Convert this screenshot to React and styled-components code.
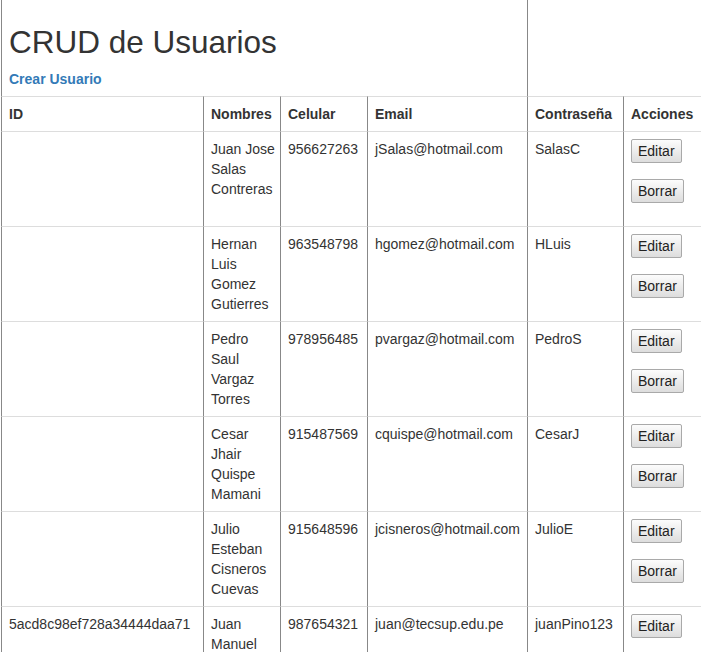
import React from "react";
import styled, { createGlobalStyle } from "styled-components";

const Global = createGlobalStyle`
  html, body {
    margin: 0;
    padding: 0;
    background: #fff;
    overflow: hidden;
  }
  body {
    font-family: "Liberation Sans", Arial, Helvetica, sans-serif;
    font-size: 14px;
    line-height: 20px;
    color: #333;
  }
  * { box-sizing: border-box; }
`;

const COLS = "202px 77px 87px 160px 96px 78px";

const Page = styled.div`
  padding-left: 1px;
  width: 702px;
`;

const Row = styled.div`
  display: grid;
  grid-template-columns: ${COLS};
`;

const Cell = styled.div`
  border-left: 1px solid #888;
  border-top: ${(p) => (p.$noTop ? "none" : "1px solid #ddd")};
  padding: 7px 4px 7px 7px;
  grid-column: ${(p) => (p.$span ? `span ${p.$span}` : "auto")};
  font-weight: ${(p) => (p.$head ? "bold" : "normal")};
  word-wrap: break-word;
`;

const Title = styled.h1`
  font-size: 31.5px;
  font-weight: normal;
  line-height: 1.1;
  margin: 17.5px 0 10px;
  color: #333;
`;

const CreateLink = styled.a`
  color: #337ab7;
  font-weight: bold;
  text-decoration: none;
`;

const Actions = styled.div`
  display: flex;
  flex-direction: column;
  align-items: flex-start;
  gap: 16px;
  padding-bottom: 16px;
`;

const Button = styled.button`
  font-family: inherit;
  font-size: 14px;
  line-height: 20px;
  height: 24px;
  padding: 1px 6px;
  margin: 0;
  color: #222;
  border: 1px solid #a9a9a9;
  border-radius: 2px;
  background: linear-gradient(#fcfcfc, #dddddd);
  cursor: pointer;
`;

const users = [
  { id: "", name: "Juan Jose Salas Contreras", phone: "956627263", email: "jSalas@hotmail.com", pass: "SalasC" },
  { id: "", name: "Hernan Luis Gomez Gutierres", phone: "963548798", email: "hgomez@hotmail.com", pass: "HLuis" },
  { id: "", name: "Pedro Saul Vargaz Torres", phone: "978956485", email: "pvargaz@hotmail.com", pass: "PedroS" },
  { id: "", name: "Cesar Jhair Quispe Mamani", phone: "915487569", email: "cquispe@hotmail.com", pass: "CesarJ" },
  { id: "", name: "Julio Esteban Cisneros Cuevas", phone: "915648596", email: "jcisneros@hotmail.com", pass: "JulioE" },
  { id: "5acd8c98ef728a34444daa71", name: "Juan Manuel Pino Rojas", phone: "987654321", email: "juan@tecsup.edu.pe", pass: "juanPino123" },
];

export default function App() {
  return (
    <>
      <Global />
      <Page>
        <Row>
          <Cell $noTop $span={4}>
            <Title>CRUD de Usuarios</Title>
            <CreateLink href="#">Crear Usuario</CreateLink>
          </Cell>
          <Cell $noTop $span={2} />
        </Row>
        <Row>
          <Cell $head>ID</Cell>
          <Cell $head>Nombres</Cell>
          <Cell $head>Celular</Cell>
          <Cell $head>Email</Cell>
          <Cell $head>Contraseña</Cell>
          <Cell $head>Acciones</Cell>
        </Row>
        {users.map((u, i) => (
          <Row key={i}>
            <Cell>{u.id}</Cell>
            <Cell>{u.name}</Cell>
            <Cell>{u.phone}</Cell>
            <Cell>{u.email}</Cell>
            <Cell>{u.pass}</Cell>
            <Cell>
              <Actions>
                <Button>Editar</Button>
                <Button>Borrar</Button>
              </Actions>
            </Cell>
          </Row>
        ))}
      </Page>
    </>
  );
}
